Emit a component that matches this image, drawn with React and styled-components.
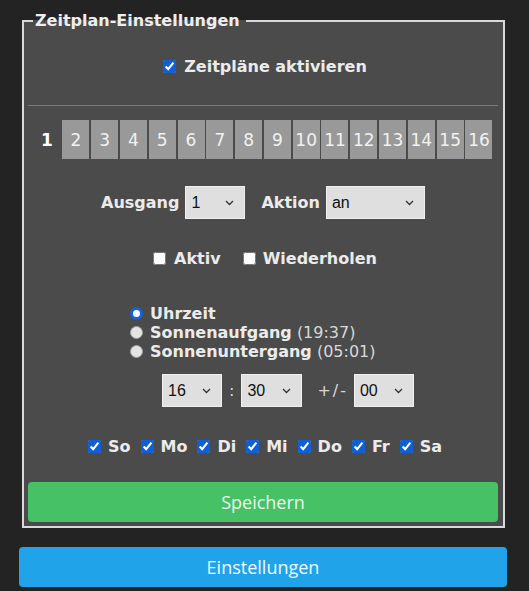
import React, { useState } from "react";
import styled, { createGlobalStyle } from "styled-components";

const GlobalStyle = createGlobalStyle`
  html, body {
    margin: 0;
    padding: 0;
    background: #232323;
  }
  body {
    font-family: "DejaVu Sans", Verdana, sans-serif;
    color: #ebebeb;
  }
`;

const Page = styled.div`
  width: 488px;
  padding: 11px 0 0 19px;
`;

const Fieldset = styled.fieldset`
  box-sizing: border-box;
  width: 483px;
  margin: 0 0 0 3px;
  padding: 0 5px 4px 4px;
  border: 2px solid #d9d9d9;
  background: #4b4b4b;
  min-width: 0;
`;

const Legend = styled.legend`
  margin-left: 5px;
  padding: 0 6px 0 2px;
  font-size: 16px;
  line-height: 19px;
  font-weight: bold;
  color: #eeeeee;
`;

const Row = styled.div`
  display: flex;
  align-items: center;
  justify-content: ${(p) => p.$justify || "center"};
  height: ${(p) => p.$h}px;
  margin-top: ${(p) => p.$mt}px;
  padding-left: ${(p) => p.$pl || 0}px;
  gap: ${(p) => p.$gap || 0}px;
`;

const Divider = styled.div`
  height: 1px;
  margin-top: 29px;
  background: #7a7a7a;
`;

const Tabs = styled.div`
  display: flex;
  justify-content: center;
  gap: 1.8px;
  height: 39px;
  margin-top: 14px;
`;

const Tab = styled.div`
  width: 27px;
  display: flex;
  align-items: center;
  justify-content: center;
  background: ${(p) => (p.$active ? "transparent" : "#999999")};
  color: ${(p) => (p.$active ? "#ffffff" : "#f2f2f2")};
  font-size: 17px;
  font-weight: ${(p) => (p.$active ? "bold" : "normal")};
  cursor: pointer;
`;

const Label = styled.label`
  display: inline-flex;
  align-items: center;
  gap: ${(p) => p.$gap ?? 8}px;
  font-size: 16px;
  font-weight: bold;
  color: #ebebeb;
  white-space: nowrap;
`;

const Text = styled.span`
  font-size: 16px;
  font-weight: ${(p) => (p.$light ? "normal" : "bold")};
  color: ${(p) => (p.$light ? "#d8d8d8" : "#ebebeb")};
  letter-spacing: ${(p) => p.$spacing || 0}px;
`;

const Check = styled.input.attrs({ type: "checkbox" })`
  width: 13px;
  height: 13px;
  margin: 0;
  accent-color: #0f5fd6;
`;

const SelectWrap = styled.span`
  position: relative;
  display: inline-block;
  width: ${(p) => p.$w}px;
  height: 33px;
`;

const Select = styled.select`
  appearance: none;
  box-sizing: border-box;
  width: 100%;
  height: 100%;
  padding: 0 0 0 5px;
  border: 1px solid #efefef;
  border-radius: 0;
  background: #dfdfdf;
  color: #111;
  font-family: "Liberation Sans", Arial, sans-serif;
  font-size: 16px;
  outline: none;
`;

const Chevron = styled.svg`
  position: absolute;
  right: 11px;
  top: 14px;
  pointer-events: none;
`;

const RadioGroup = styled.div`
  display: flex;
  flex-direction: column;
  margin-top: 36px;
  padding-left: 102px;
`;

const RadioLine = styled.label`
  display: flex;
  align-items: center;
  gap: 7px;
  height: 19px;
`;

const Radio = styled.input.attrs({ type: "radio" })`
  appearance: none;
  box-sizing: border-box;
  width: 13px;
  height: 13px;
  margin: 0;
  border-radius: 50%;
  border: 1px solid #a0a0a0;
  background: #e4e4e4;

  &:checked {
    border: 3.5px solid #1464d8;
    background: #ffffff;
  }
`;

const Button = styled.button`
  display: block;
  box-sizing: border-box;
  width: 100%;
  height: 40px;
  margin-top: ${(p) => p.$mt}px;
  border: 0;
  border-radius: 4px;
  background: ${(p) => p.$bg};
  color: ${(p) => p.$fg};
  font-family: "Open Sans", "Noto Sans", sans-serif;
  font-size: 18px;
  cursor: pointer;
`;

const DropDown = ({ w, value, options }) => (
  <SelectWrap $w={w}>
    <Select defaultValue={value}>
      {options.map((o) => (
        <option key={o}>{o}</option>
      ))}
    </Select>
    <Chevron width="9" height="6" viewBox="0 0 9 6">
      <path d="M1 1l3.5 3.5L8 1" fill="none" stroke="#333" strokeWidth="1.3" />
    </Chevron>
  </SelectWrap>
);

const days = ["So", "Mo", "Di", "Mi", "Do", "Fr", "Sa"];
const hours = Array.from({ length: 24 }, (_, i) => String(i).padStart(2, "0"));
const minutes = Array.from({ length: 60 }, (_, i) => String(i).padStart(2, "0"));

export default function App() {
  const [tab, setTab] = useState(1);
  const [mode, setMode] = useState("uhrzeit");

  return (
    <Page>
      <GlobalStyle />
      <Fieldset>
        <Legend>Zeitplan-Einstellungen</Legend>

        <Row $h={20} $mt={26} $pl={4}>
          <Label>
            <Check defaultChecked />
            Zeitpläne aktivieren
          </Label>
        </Row>

        <Divider />

        <Tabs>
          {Array.from({ length: 16 }, (_, i) => i + 1).map((n) => (
            <Tab key={n} $active={n === tab} onClick={() => setTab(n)}>
              {n}
            </Tab>
          ))}
        </Tabs>

        <Row $h={33} $mt={27} $gap={6}>
          <Text>Ausgang</Text>
          <DropDown w={60} value="1" options={["1", "2", "3", "4"]} />
          <Text style={{ marginLeft: 10 }}>Aktion</Text>
          <DropDown w={99} value="an" options={["an", "aus", "umschalten"]} />
        </Row>

        <Row $h={20} $mt={29} $pl={4} $gap={22}>
          <Label>
            <Check />
            Aktiv
          </Label>
          <Label $gap={7}>
            <Check />
            Wiederholen
          </Label>
        </Row>

        <RadioGroup>
          <RadioLine>
            <Radio name="mode" checked={mode === "uhrzeit"} onChange={() => setMode("uhrzeit")} />
            <Text>Uhrzeit</Text>
          </RadioLine>
          <RadioLine>
            <Radio name="mode" checked={mode === "auf"} onChange={() => setMode("auf")} />
            <span>
              <Text>Sonnenaufgang</Text> <Text $light>(19:37)</Text>
            </span>
          </RadioLine>
          <RadioLine>
            <Radio name="mode" checked={mode === "unter"} onChange={() => setMode("unter")} />
            <span>
              <Text>Sonnenuntergang</Text> <Text $light>(05:01)</Text>
            </span>
          </RadioLine>
        </RadioGroup>

        <Row $h={33} $mt={13} $justify="flex-start" $pl={134} $gap={7}>
          <DropDown w={60} value="16" options={hours} />
          <Text $light>:</Text>
          <DropDown w={61} value="30" options={minutes} />
          <Text $light $spacing={2} style={{ margin: "0 -1px 0 8px" }}>
            +/-
          </Text>
          <DropDown w={60} value="00" options={minutes} />
        </Row>

        <Row $h={20} $mt={29} $pl={4} $gap={10}>
          {days.map((d) => (
            <Label key={d} $gap={7}>
              <Check defaultChecked />
              {d}
            </Label>
          ))}
        </Row>

        <Button $mt={26} $bg="#46c166" $fg="#eaf7ec">
          Speichern
        </Button>
      </Fieldset>

      <Button $mt={19} $bg="#21a3e9" $fg="#f2f9fe">
        Einstellungen
      </Button>
    </Page>
  );
}
